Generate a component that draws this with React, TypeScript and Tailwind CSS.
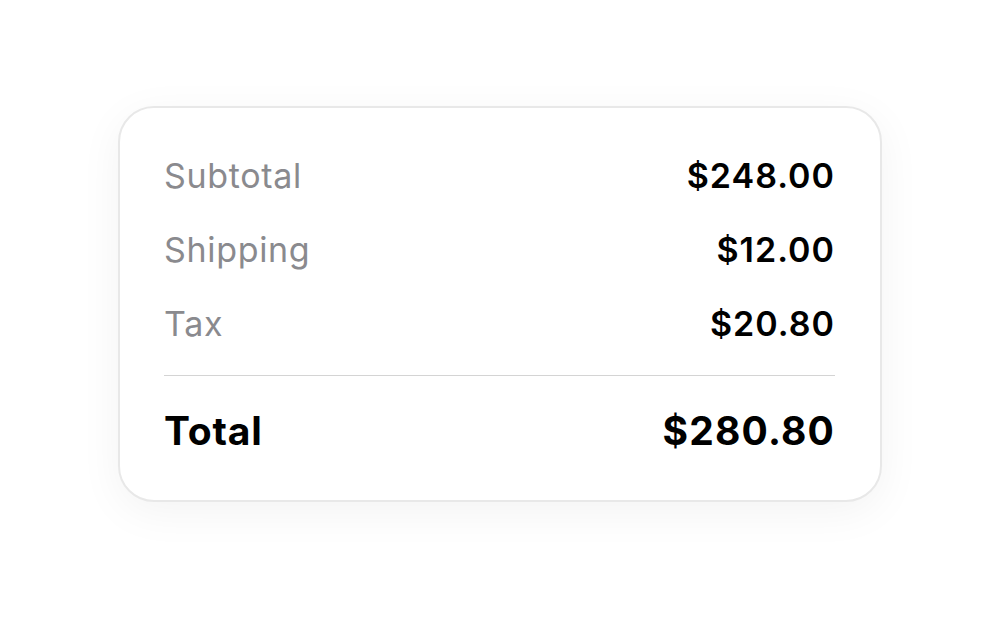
const rows = [
  { label: "Subtotal", value: "$248.00" },
  { label: "Shipping", value: "$12.00" },
  { label: "Tax", value: "$20.80" },
];

export default function App() {
  return (
    <div
      className="min-h-[630px] w-full bg-white flex justify-center pt-[106px]"
      style={{ fontFamily: "Inter, 'Noto Sans', sans-serif" }}
    >
      <div className="w-[764px] h-[396px] rounded-[36px] border-2 border-[#e8e8e8] bg-white shadow-[0_10px_44px_rgba(0,0,0,0.05)] pl-[44px] pr-[45px] pt-[47px]">
        <div className="flex flex-col gap-[34px]">
          {rows.map((r) => (
            <div key={r.label} className="flex justify-between items-center h-[40px]">
              <span className="text-[34px] text-[#8a8a8e] tracking-[0.02em]">{r.label}</span>
              <span className="text-[34px] font-semibold text-black tracking-[0.03em]">
                {r.value}
              </span>
            </div>
          ))}
        </div>
        <div className="h-px bg-[#d4d4d4] mt-[32px]" />
        <div className="flex justify-between items-center h-[48px] mt-[31px]">
          <span className="text-[39px] font-bold text-black tracking-[0.02em]">Total</span>
          <span className="text-[39px] font-bold text-black tracking-[0.03em]">$280.80</span>
        </div>
      </div>
    </div>
  );
}
